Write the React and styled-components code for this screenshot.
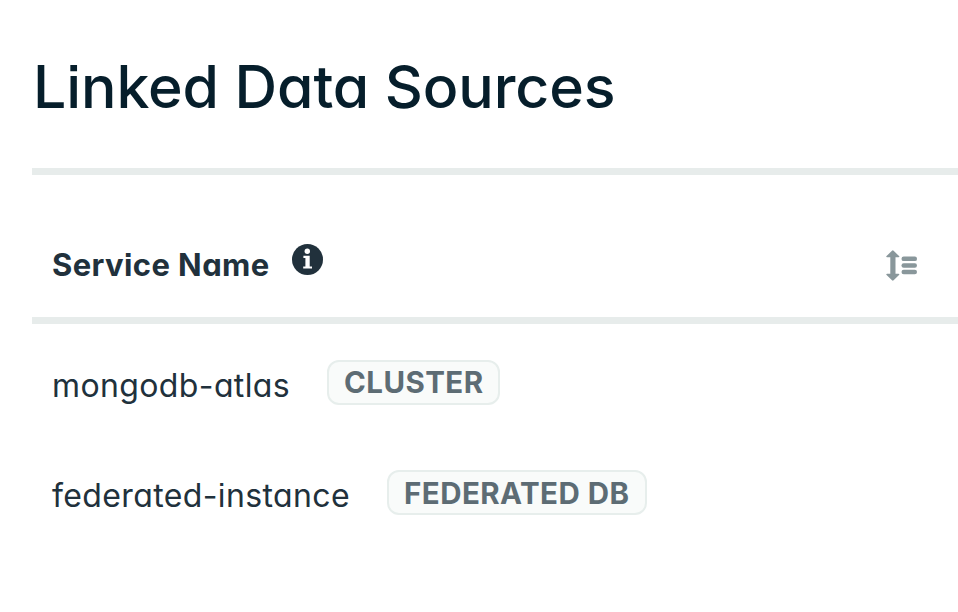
import React from "react";
import styled, { createGlobalStyle } from "styled-components";

const GlobalStyle = createGlobalStyle`
  *, *::before, *::after { box-sizing: border-box; }
  body {
    margin: 0;
    background: #fff;
    color: #21313c;
    font-family: "Euclid Circular A", Inter, sans-serif;
    font-feature-settings: "cv11", "ss07";
    overflow: hidden;
  }
`;

const Page = styled.main`
  height: 612px;
  padding: 50px 0 0 32px;
  white-space: nowrap;
`;

const Title = styled.h1`
  margin: 0;
  height: 118px;
  padding-left: 1px;
  color: #061e2b;
  font-size: 59px;
  font-weight: 550;
  line-height: 73px;
  letter-spacing: -0.1px;
`;

const HeaderRow = styled.div`
  display: flex;
  align-items: flex-start;
  height: 156px;
  padding: 69px 41px 0 20px;
  border: solid #e7eceb;
  border-width: 7px 0;
`;

const HeaderLabel = styled.span`
  width: 240px;
  margin-top: 1px;
  font-size: 31px;
  font-weight: 680;
  line-height: 40px;
  letter-spacing: 0.4px;
`;

const SortButton = styled.button`
  display: flex;
  margin: 6px 0 0 auto;
  padding: 0;
  border: 0;
  background: none;
  color: #89979b;
`;

const Row = styled.div`
  display: flex;
  align-items: flex-start;
  height: 110px;
  padding: 36px 20px 0;
`;

const SourceName = styled.span`
  width: ${(p) => p.$width}px;
  padding-top: 4px;
  font-size: 32px;
  line-height: 44px;
  letter-spacing: 0.38px;
`;

const Badge = styled.span`
  width: ${(p) => p.$width}px;
  height: 45px;
  padding: ${(p) => p.$offset}px 0 0 15px;
  border: 2px solid #e7eeec;
  border-radius: 12px;
  background: #f9fbfa;
  color: #5d6c74;
  font-size: 29.5px;
  font-weight: 680;
  line-height: 41px;
  letter-spacing: 0.45px;
`;

const InfoIcon = () => (
  <svg width="31" height="31" viewBox="0 0 31 31" aria-hidden="true">
    <circle cx="15.5" cy="15.5" r="15.5" fill="#21313c" />
    <circle cx="15.3" cy="7.2" r="2.7" fill="#fff" />
    <path d="M11.4 11.8H17.7V22.5H20V24.6H11.2V22.5H13.4V13.9H11.4Z" fill="#fff" />
  </svg>
);

const SortIcon = () => (
  <svg width="31" height="31" viewBox="0 0 31 31" fill="currentColor" aria-hidden="true">
    <path d="M6 0.7Q6.8 0 7.6 0.7L13 5.9Q14.1 7.2 12.5 7.2H9.5V23.8H12.5Q14.1 23.8 13 25.1L7.6 30.3Q6.8 31 6 30.3L0.6 25.1Q-0.5 23.8 1.1 23.8H4.3V7.2H1.1Q-0.5 7.2 0.6 5.9Z" />
    <rect x="15.5" y="6.6" width="15.5" height="4.5" rx="2.2" />
    <rect x="15.5" y="13.2" width="15.5" height="4.5" rx="2.2" />
    <rect x="15.5" y="19.8" width="15.5" height="4.5" rx="2.2" />
  </svg>
);

const sources = [
  { name: "mongodb-atlas", nameWidth: 275, type: "CLUSTER", badgeWidth: 173, badgeOffset: 0 },
  { name: "federated-instance", nameWidth: 335, type: "FEDERATED DB", badgeWidth: 260, badgeOffset: 1 },
];

export default function App() {
  return (
    <Page>
      <GlobalStyle />
      <Title>Linked Data Sources</Title>
      <HeaderRow>
        <HeaderLabel>Service Name</HeaderLabel>
        <InfoIcon />
        <SortButton aria-label="Sort by service name">
          <SortIcon />
        </SortButton>
      </HeaderRow>
      {sources.map((s) => (
        <Row key={s.name}>
          <SourceName $width={s.nameWidth}>{s.name}</SourceName>
          <Badge $width={s.badgeWidth} $offset={s.badgeOffset}>
            {s.type}
          </Badge>
        </Row>
      ))}
    </Page>
  );
}
